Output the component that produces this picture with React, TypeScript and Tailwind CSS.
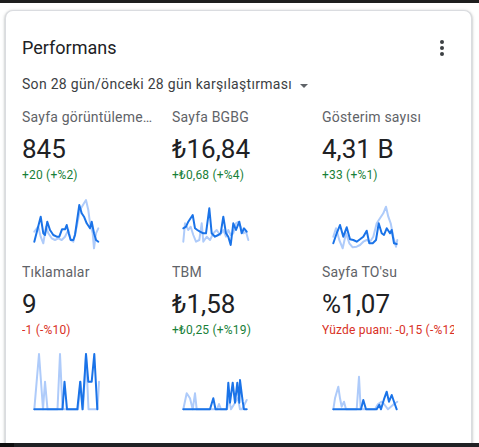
import React from "react";

type Pt = [number, number];

interface Metric {
  label: string;
  value: string;
  delta: string;
  up: boolean;
  light: Pt[];
  dark: Pt[];
}

const toPath = (pts: Pt[]) => pts.map((p) => `${p[0]},${p[1]}`).join(" ");

const metrics: Metric[] = [
  {
    label: "Sayfa görüntülemeleri",
    value: "845",
    delta: "+20 (+%2)",
    up: true,
    light: [[12.3,48.7],[16.3,43.7],[18.7,53.7],[21.3,60.3],[24,43.7],[26.3,50.3],[29.7,55.3],[33,57],[36.3,55.3],[39.7,57],[43,53.7],[46.3,47],[48.7,57],[51.3,58.7],[54.7,43.7],[58,27],[62,20.3],[64,17],[66.3,27],[68,40.3],[70.7,50.3],[72,65.3],[74,50.3],[76.3,45.3]],
    dark: [[12.3,58.7],[18.7,33.7],[21.3,50.3],[23,52],[25.3,38.7],[28,47],[31.3,52],[34.7,53.7],[37.3,53.7],[40,46.3],[43,46.3],[44.7,42],[46.7,50.3],[48.7,57],[51.3,57],[53,52],[57.3,22],[59.7,30.3],[62,33.7],[64.7,40.3],[68,45.3],[69.7,38.7],[72,50.3],[74,57],[76.3,58.7]],
  },
  {
    label: "Sayfa BGBG",
    value: "₺16,84",
    delta: "+₺0,68 (+%4)",
    up: true,
    light: [[11.3,58.7],[13,40.3],[16.3,47],[18.7,43.7],[21.3,52],[24,58.7],[27.3,57],[29.7,40.3],[31.3,58.7],[34.7,53.7],[38,57],[41.3,50.3],[44.7,47],[48,52],[51.3,47],[54,53.7],[56.3,47],[58.7,52],[61.3,50.3],[64,40.3],[66.3,38.7],[68.7,43.7],[71.3,50.3],[74,48.7],[76.3,57]],
    dark: [[11.3,45.3],[14,43.7],[16.3,38.7],[20.7,32],[23,45.3],[25.3,47],[28,48.7],[31.3,50.3],[34,50.3],[37.3,25.3],[39.7,50.3],[43,53.7],[46.3,52],[48.7,50.3],[51.3,33.7],[54,50.3],[56.3,53.7],[58.7,62],[61.3,40.3],[64,47],[67.3,38.7],[69.7,50.3],[72,45.3],[74.7,48.7]],
  },
  {
    label: "Gösterim sayısı",
    value: "4,31 B",
    delta: "+33 (+%1)",
    up: true,
    light: [[11.3,53.7],[14,45.3],[17.3,57],[20.7,65.3],[24,50.3],[27.3,60.3],[30.7,64.3],[34.7,63.7],[38,62],[41.3,58.7],[44.7,57],[48,58.7],[51.3,53.7],[54.7,40.3],[58,35.3],[61.3,30.3],[64,23.7],[66.3,33.7],[68.7,40.3],[71.3,53.7],[74,63.7],[75.3,57]],
    dark: [[11.3,60.3],[14.7,50.3],[18,42],[21.3,53.7],[24.7,44.3],[28,56.3],[31.3,57],[34.7,58.7],[38,56.3],[41.3,53.7],[44.7,47.7],[47.3,60.3],[50.7,60.3],[54,57],[56.7,40.3],[59.7,50.3],[62,52],[64.7,45.3],[68,50.3],[69.7,47],[72,60.3],[74.7,61]],
  },
  {
    label: "Tıklamalar",
    value: "9",
    delta: "-1 (-%10)",
    up: false,
    light: [[12.3,71.3],[17,16],[21,71.3],[23,43.7],[25.5,71.3],[35.5,71.3],[38,16],[40.5,71.3],[56,71.3],[58.5,43.7],[61,71.3],[64,16],[66.5,71.3],[73,71.3],[75.5,71.3],[77,43.7]],
    dark: [[12.3,71.3],[40.5,71.3],[42.5,43.7],[45,71.3],[55.3,71.3],[58.2,43.7],[60.5,71.3],[62.3,43.7],[64,16],[66.3,43.7],[69.7,43.7],[72.3,16],[75.3,71.3]],
  },
  {
    label: "TBM",
    value: "₺1,58",
    delta: "+₺0,25 (+%19)",
    up: true,
    light: [[11.3,71.3],[14.7,55.3],[18,60.3],[20.7,71.3],[23,55.3],[24.7,71.3],[45,71.3],[47,66],[49,71.3],[55,71.3],[57,60],[59,71.3],[66,60],[68,71.3],[70,71.3],[74.7,62]],
    dark: [[11.3,71.3],[38,71.3],[41.3,60.3],[43.5,71.3],[54.7,71.3],[56.3,44.7],[58,64.7],[60.7,44.7],[63,64.7],[65.3,44.7],[67.3,64.7],[68,42],[70.7,63.7],[72,71.3],[74.7,71.3]],
  },
  {
    label: "Sayfa TO'su",
    value: "%1,07",
    delta: "Yüzde puanı: -0,15 (-%12,3)",
    up: false,
    light: [[11.3,71.3],[13,60.3],[16.3,48.7],[18,60.3],[19.7,68.7],[22,63.7],[24,71.3],[34.7,71.3],[37,38.7],[38.7,71.3],[53,71.3],[56,66],[59.7,63.7],[62,66],[66,71.3],[72,66],[75.3,63.7]],
    dark: [[11.3,71.3],[39,71.3],[41.3,62],[44,71.3],[54.7,71.3],[57.3,66.7],[59,71.3],[62.3,60.3],[64.7,53.7],[67,63.7],[69.7,57],[72,63.7],[74.7,71.3]],
  },
];

function Sparkline({ light, dark }: { light: Pt[]; dark: Pt[] }) {
  return (
    <svg width="132" height="79" viewBox="0 0 132 79" className="block">
      <polyline
        points={toPath(light)}
        fill="none"
        stroke="#aecbfa"
        strokeWidth="2"
        strokeLinejoin="round"
        strokeLinecap="round"
      />
      <polyline
        points={toPath(dark)}
        fill="none"
        stroke="#1a73e8"
        strokeWidth="2"
        strokeLinejoin="round"
        strokeLinecap="round"
      />
    </svg>
  );
}

function MetricCell({ m }: { m: Metric }) {
  return (
    <div className="flex w-[132px] flex-col">
      <div className="truncate text-[14px] leading-5 tracking-[0.2px] text-[#5f6368]">
        {m.label}
      </div>
      <div className="mt-[6px] whitespace-nowrap text-[26px] leading-[32px] text-[#202124]">
        {m.value}
      </div>
      <div
        className={
          "mt-[2px] overflow-hidden whitespace-nowrap text-[12px] leading-4 tracking-[0.2px] " +
          (m.up ? "text-[#188038]" : "text-[#d93025]")
        }
      >
        {m.delta}
      </div>
      <Sparkline light={m.light} dark={m.dark} />
    </div>
  );
}

export default function App() {
  return (
    <div className="flex h-[447px] w-[479px] flex-col overflow-hidden bg-white font-['Roboto',sans-serif]">
      <div className="h-[3px] shrink-0 bg-[#1e1e1e]" />
      <div className="ml-[5px] mt-[7px] flex w-[467px] flex-1 flex-col rounded-t-lg border border-b-0 border-[#dadce0] bg-white pl-4 pr-[17px] pt-[17px] shadow-[0_1px_2px_0_rgba(60,64,67,0.3),0_1px_3px_1px_rgba(60,64,67,0.15)]">
        <div className="flex h-10 items-center justify-between">
          <div className="text-[18px] leading-6 text-[#202124]">Performans</div>
          <svg width="24" height="24" viewBox="0 0 24 24" fill="#3c4043">
            <circle cx="12" cy="6" r="2" />
            <circle cx="12" cy="12" r="2" />
            <circle cx="12" cy="18" r="2" />
          </svg>
        </div>
        <div className="mt-[5.5px] flex">
          <span className="text-[14px] leading-5 tracking-[0.3px] text-[#3c4043]">
            Son 28 gün/önceki 28 gün karşılaştırması
          </span>
          <svg width="8" height="4" viewBox="0 0 8 4" className="ml-[8px] mt-[10px]">
            <polygon points="0,0 8,0 4,4" fill="#5f6368" />
          </svg>
        </div>
        <div className="mt-[13px] grid grid-cols-[132px_132px_132px] gap-x-[18px]">
          {metrics.map((m) => (
            <MetricCell key={m.label} m={m} />
          ))}
        </div>
      </div>
      <div className="flex h-[4px] shrink-0">
        <div className="w-[14px] bg-[#0f0f0f]" />
        <div className="flex-1 bg-[#202124]" />
      </div>
    </div>
  );
}
